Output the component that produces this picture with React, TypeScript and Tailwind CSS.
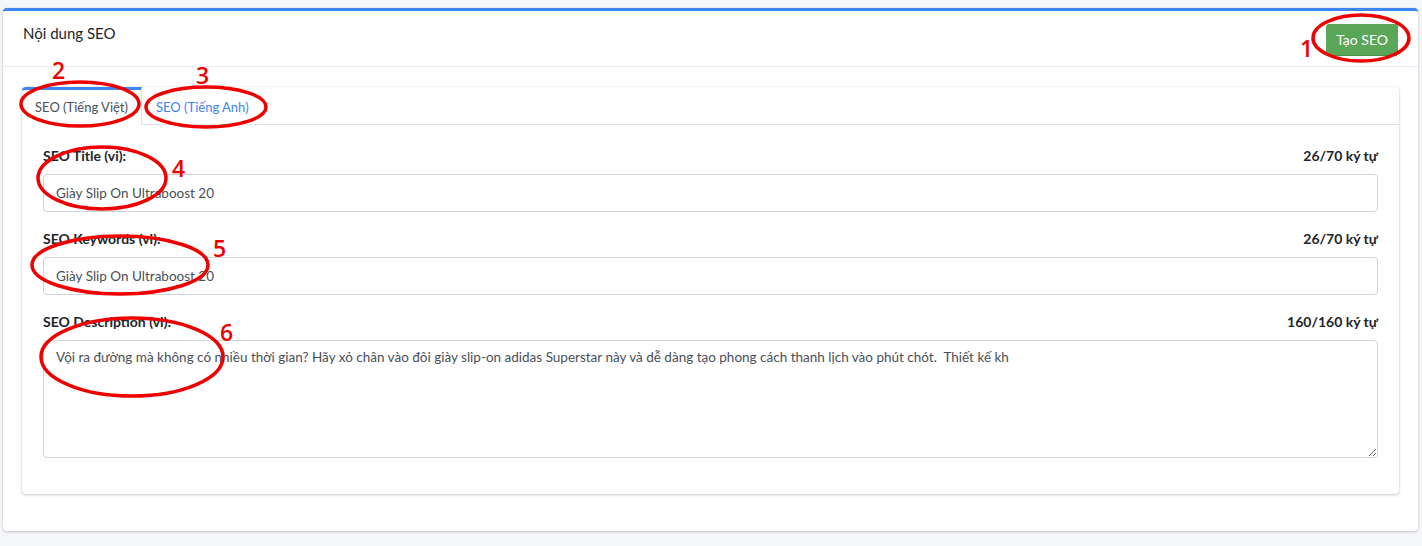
import React from "react";

const FONT = { fontFamily: "Lato, 'Noto Sans', sans-serif" };

function Field({
  label,
  counter,
  value,
  area,
}: {
  label: string;
  counter: string;
  value: string;
  area?: boolean;
}) {
  return (
    <div className="flex flex-col gap-[8px]">
      <div className="flex items-end justify-between leading-[20px] text-[14px] font-bold text-[#212529]">
        <span>{label}</span>
        <span>{counter}</span>
      </div>
      {area ? (
        <textarea
          readOnly
          defaultValue={value}
          className="block w-full h-[118px] rounded-[4px] border border-[#ced4da] bg-white px-[12px] pt-[6px] pb-[6px] text-[13.5px] leading-[21px] text-[#495057] outline-none resize-y"
        />
      ) : (
        <input
          readOnly
          defaultValue={value}
          className="block w-full h-[38px] rounded-[4px] border border-[#ced4da] bg-white px-[12px] text-[13.5px] text-[#495057] outline-none"
        />
      )}
    </div>
  );
}

export default function App() {
  const desc =
    "Vội ra đường mà không có nhiều thời gian? Hãy xỏ chân vào đôi giày slip-on adidas Superstar này và dễ dàng tạo phong cách thanh lịch vào phút chót.  Thiết kế kh";
  return (
    <div className="relative w-[1422px] h-[546px] bg-[#f4f6f9] pt-[8px] px-[3px] overflow-hidden" style={FONT}>
      <div className="w-[1415px] h-[523px] bg-white rounded-[4px] border-t-[3px] border-[#3d85f0] shadow-[0_0_1px_rgba(0,0,0,0.15),0_1px_3px_rgba(0,0,0,0.2)]">
        <div className="flex items-start justify-between px-5 pt-[11px] pb-[10px] border-b border-[#e9ecef]">
          <h3 className="text-[15px] leading-[22px] text-[#212529]">Nội dung SEO</h3>
          <button className="mt-[2px] h-8 px-[10px] rounded-[3px] bg-[#5aa75a] text-white text-[14px] border-b border-[#4a914a]">
            Tạo SEO
          </button>
        </div>
        <div className="px-[19px] pt-[20px]">
          <div className="rounded-[4px] bg-white shadow-[0_0_1px_rgba(0,0,0,0.2),0_1px_3px_rgba(0,0,0,0.2)]">
            <div className="flex h-[38px] border-b border-[#dee2e6]">
              <div className="w-[120px] border-t-[3px] border-t-[#3d85f0] border-r border-r-[#dee2e6] rounded-tl-[4px] bg-white flex items-center justify-center pt-[1px] text-[13px] text-[#495057] -mb-px">
                SEO (Tiếng Việt)
              </div>
              <div className="px-[14px] flex items-center text-[13px] text-[#3c82ee] pt-[4px]">SEO (Tiếng Anh)</div>
            </div>
            <div className="flex flex-col gap-[17px] px-[21px] pt-[21px] pb-[36px]">
              <Field label="SEO Title (vi):" counter="26/70 ký tự" value="Giày Slip On Ultraboost 20" />
              <Field label="SEO Keywords (vi):" counter="26/70 ký tự" value="Giày Slip On Ultraboost 20" />
              <Field label="SEO Description (vi):" counter="160/160 ký tự" value={desc} area />
            </div>
          </div>
        </div>
      </div>

      <svg className="absolute inset-0 pointer-events-none" width="1422" height="546" viewBox="0 0 1422 546">
        <g fill="none" stroke="#ee0000" strokeWidth="3.5">
          <ellipse cx="1361" cy="38" rx="48" ry="23" />
          <ellipse cx="80" cy="104" rx="59" ry="22" />
          <ellipse cx="206" cy="107" rx="60" ry="20" />
          <ellipse cx="102" cy="178" rx="64" ry="31" />
          <ellipse cx="120" cy="265" rx="88" ry="29" />
          <ellipse cx="132" cy="357" rx="91" ry="39" />
        </g>
      </svg>
      <div className="absolute inset-0 pointer-events-none text-[#ee0000] text-[23px] font-semibold leading-none" style={{ fontFamily: "'Open Sans', sans-serif" }}>
        <span className="absolute left-[1300px] top-[37px]">1</span>
        <span className="absolute left-[52px] top-[59px]">2</span>
        <span className="absolute left-[196px] top-[64px]">3</span>
        <span className="absolute left-[172px] top-[157px]">4</span>
        <span className="absolute left-[213px] top-[237px]">5</span>
        <span className="absolute left-[220px] top-[321px]">6</span>
      </div>
    </div>
  );
}
